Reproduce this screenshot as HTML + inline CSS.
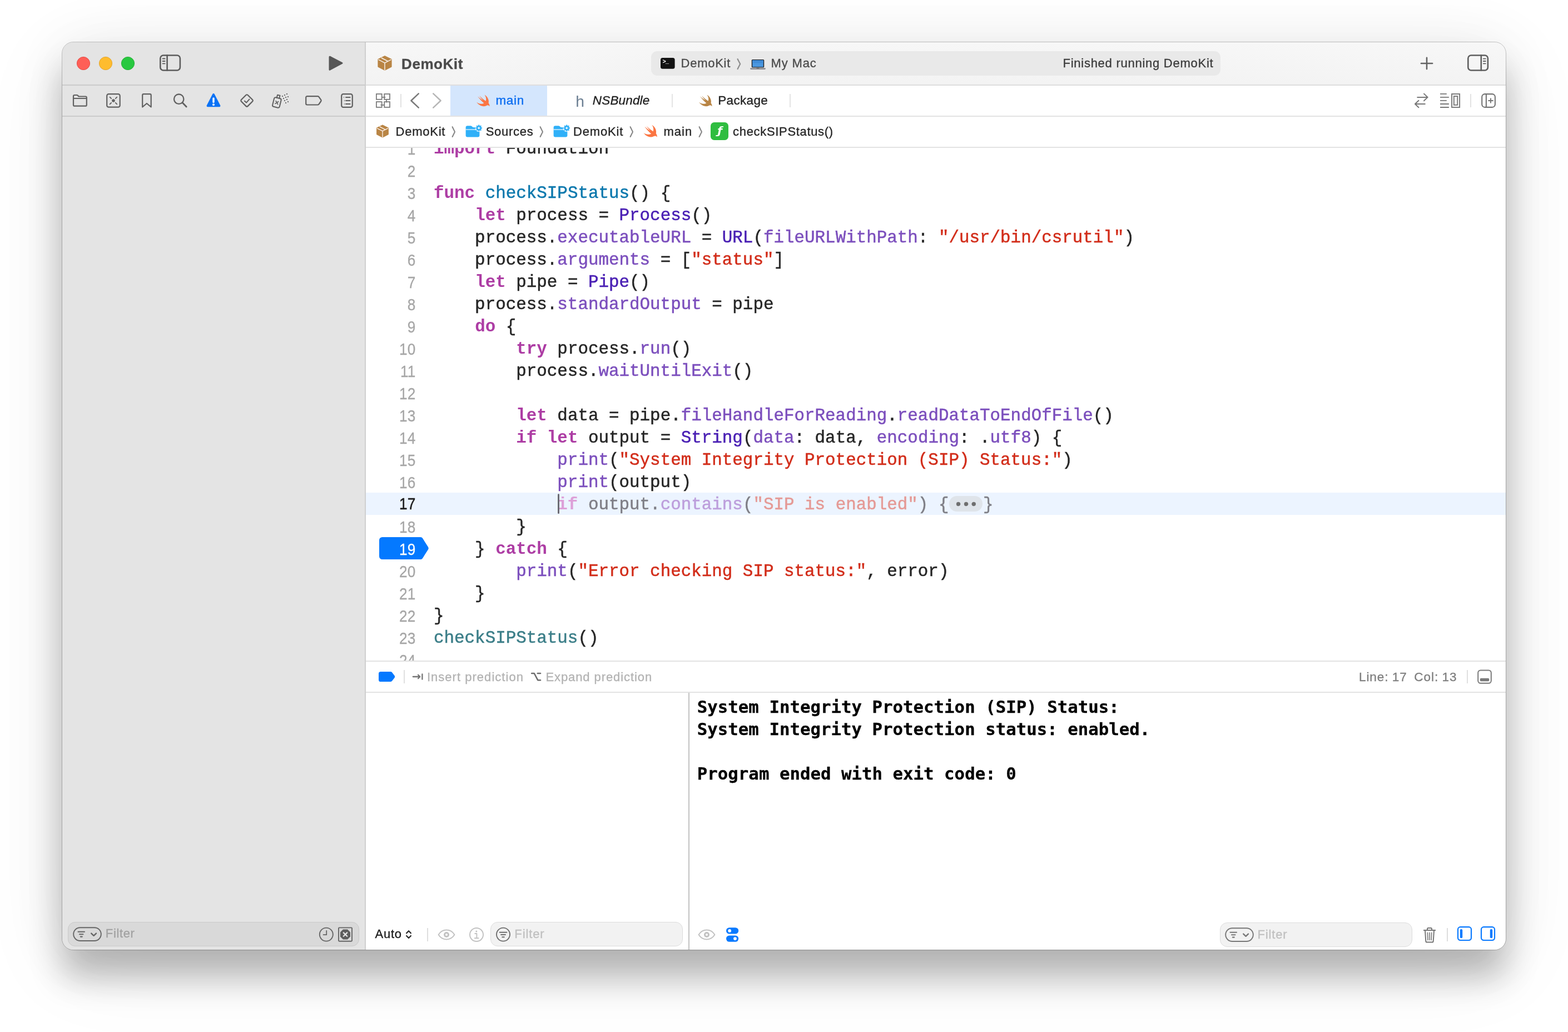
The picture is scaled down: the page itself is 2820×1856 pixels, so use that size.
<!DOCTYPE html>
<html lang="en">
<head>
<meta charset="utf-8">
<title>DemoKit — main.swift</title>
<style>
*{box-sizing:border-box;margin:0;padding:0}
html,body{width:2820px;height:1856px;background:#fff}
body{position:relative;font-family:"Liberation Sans",sans-serif;color:#262626;-webkit-font-smoothing:antialiased}
#shadow{position:absolute;left:112px;top:76px;width:2596px;height:1632px;border-radius:20px;
  box-shadow:0 50px 60px rgba(0,0,0,.24),0 10px 100px rgba(0,0,0,.07),0 30px 160px rgba(0,0,0,.07)}
#win{position:absolute;left:112px;top:76px;width:2596px;height:1632px;border-radius:20px;overflow:hidden;background:#fff}
#pg{position:absolute;left:-112px;top:-76px;width:2820px;height:1856px;will-change:transform}
.abs,#pg>*,#pg svg{position:absolute}
.t{position:absolute;white-space:pre;line-height:1;-webkit-text-stroke:.35px}
/* regions */
#sidebar{left:112px;top:76px;width:544px;height:1632px;background:#e4e4e4}
#sideline{left:656px;top:76px;width:2px;height:1632px;background:#cfcfcf}
#titlebar{left:658px;top:76px;width:2050px;height:76px;background:linear-gradient(#f7f7f7,#f3f3f3)}
.hl{height:2px;background:#dfdfdf}
.tl{width:24px;height:24px;top:102px;border-radius:50%;border:1px solid}
.vl{width:2px;background:#d9d9d9}
.jb{top:226.800px;font-size:23px;color:#262626}
.chev{top:225px;fill:none;stroke:#858585;stroke-width:2.100;stroke-linecap:round;stroke-linejoin:round}
#ed{left:658px;top:266px;width:2050px;height:922px;background:#fff;overflow:hidden}
#ed>*{position:absolute}
.cur{left:0;top:620px;width:2050px;height:40px;background:#ecf4ff}
.bp{left:24px;top:700px}
.n{left:0;width:89.200px;height:40px;line-height:40px;padding-top:.600px;-webkit-text-stroke:.3px;text-align:right;font-size:30.400px;color:#a6a6a6;white-space:pre;transform:scaleX(.86);transform-origin:100% 50%}
.cn{color:#1c1c1c;margin-top:-1.900px;-webkit-text-stroke:.5px}
.bn{color:#fff}
.c{left:122px;height:40px;line-height:40px;padding-top:2.200px;-webkit-text-stroke:.5px;font-family:"Liberation Mono",monospace;font-size:30.880px;color:#262626;white-space:pre}
.kw{color:#ad3da4;font-weight:bold;-webkit-text-stroke:0}
.dc{color:#0b78ad}
.ty{color:#4a20b4}
.fn{color:#7c4fbd}
.st{color:#d22d1a}
.cl{color:#3b7e88}
.gk{color:#dda0d8;font-weight:bold;-webkit-text-stroke:0}.gp{color:#7f7f86}.gf{color:#bd9fdc}.gs{color:#e59a96}
.pill{display:inline-block;vertical-align:top;width:60px;height:28px;margin:4.200px .5px 0 1px;border-radius:14px;background:#dfe4ea;color:#6e6e6e;font-family:"Liberation Sans",sans-serif;font-size:26px;line-height:28px;letter-spacing:4.700px;text-align:center;text-indent:4.700px}
.caret{left:344.600px;top:622px;width:3.200px;height:35.500px;border-radius:1.500px;background:#6b6b74}
.pb{top:1205.800px;font-size:23px;color:#b3b3b3}
.con{position:absolute;left:1253.800px;height:40px;line-height:40px;font-family:"DejaVu Sans Mono","Liberation Mono",monospace;font-weight:bold;font-size:30.750px;color:#000;white-space:pre;-webkit-text-stroke:.3px}
.ff{border-radius:13px;background:#f2f2f2;border:1.500px solid #dcdcdc}
.fl{font-size:24.500px;color:#c0c0c0}
#ring{position:absolute;left:110px;top:74px}
</style>
</head>
<body>
<div id="shadow"></div>
<div id="win"><div id="pg">
<!--SIDEBAR-->
<div id="sidebar"></div>
<div id="titlebar"></div>
<div id="sideline"></div>
<div class="hl" style="left:112px;top:152px;width:545px;background:#cbcbcb"></div>
<div class="hl" style="left:112px;top:208px;width:545px;background:#cbcbcb"></div>
<!-- traffic lights -->
<svg style="left:136px;top:100px" width="110" height="28" viewBox="0 0 110 28">
  <circle cx="14" cy="14" r="11.600" fill="#fe5f57" stroke="#e2463f" stroke-width=".9"/>
  <circle cx="54" cy="14" r="11.600" fill="#febc2e" stroke="#e0a028" stroke-width=".9"/>
  <circle cx="94" cy="14" r="11.600" fill="#28c840" stroke="#1fab30" stroke-width=".9"/>
</svg>
<!-- sidebar toggle -->
<svg style="left:285px;top:96px" width="42" height="34" viewBox="0 0 42 34" fill="none" stroke="#5c5c5c" stroke-width="2.6" stroke-linecap="round">
  <rect x="3.3" y="3.5" width="35.6" height="27" rx="5.5"/>
  <path d="M15.6 3.5v27"/>
  <path d="M7.6 9.5h4M7.6 14h4M7.6 18.4h4" stroke-width="1.8"/>
</svg>
<!-- run -->
<svg style="left:588px;top:96px" width="34" height="36" viewBox="0 0 34 36">
  <path d="M5 6.2 L27 17.5 L5 29.3 Z" fill="#565656" stroke="#565656" stroke-width="3" stroke-linejoin="round"/>
</svg>
<!-- navigator icons -->
<svg style="left:128px;top:166px" width="32" height="30" viewBox="0 0 32 30" fill="none" stroke="#606060" stroke-width="2.2" stroke-linejoin="round" stroke-linecap="round">
  <path d="M4 8.2v-1.2a2 2 0 0 1 2-2h4.2c.8 0 1.4.3 1.9.9l.9 1c.4.4.9.6 1.5.6h11.300a2 2 0 0 1 2 2v13.200a2 2 0 0 1-2 2h-19.800a2 2 0 0 1-2-2z"/>
  <path d="M4.400 11h23"/>
</svg>
<svg style="left:188px;top:166px" width="32" height="30" viewBox="0 0 32 30" fill="none" stroke="#606060" stroke-width="2.2" stroke-linecap="round">
  <rect x="4.200" y="3.200" width="23.500" height="23.500" rx="3.200"/>
  <circle cx="15.950" cy="15" r="2.800" fill="#606060" stroke="none"/>
  <path d="M9.600 8.700l2.500 2.500M22.300 8.700l-2.500 2.500M9.600 21.300l2.500-2.500M22.300 21.300l-2.500-2.500" stroke-width="1.900"/>
</svg>
<svg style="left:248px;top:166px" width="32" height="30" viewBox="0 0 32 30" fill="none" stroke="#606060" stroke-width="2.200" stroke-linejoin="round">
  <path d="M8.200 26.500v-21.300a2 2 0 0 1 2-2h11.500a2 2 0 0 1 2 2v21.300l-7.750-6.500z"/>
</svg>
<svg style="left:308px;top:166px" width="32" height="30" viewBox="0 0 32 30" fill="none" stroke="#606060" stroke-width="2.300" stroke-linecap="round">
  <circle cx="13.700" cy="12.200" r="8.700"/>
  <path d="M20.200 18.800l7 7.200" stroke-width="2.800"/>
</svg>
<svg style="left:368px;top:166px" width="32" height="30" viewBox="0 0 32 30">
  <path d="M16 3.800 L26.600 24.400 L5.400 24.400 Z" fill="#0a72f5" stroke="#0a72f5" stroke-width="3.600" stroke-linejoin="round"/>
  <path d="M16 11v6.600" stroke="#fff" stroke-width="3.400" stroke-linecap="round"/>
  <circle cx="16" cy="22.200" r="2" fill="#fff"/>
</svg>
<svg style="left:428px;top:166px" width="32" height="30" viewBox="0 0 32 30" fill="none" stroke="#606060" stroke-width="2.200" stroke-linejoin="round" stroke-linecap="round">
  <rect x="7.800" y="6.700" width="16.400" height="16.400" rx="2.300" transform="rotate(45 16 14.900)"/>
  <path d="M11.800 15.600l3.200 3 5.400-6" stroke-width="2"/>
</svg>
<svg style="left:486px;top:164px" width="38" height="34" viewBox="0 0 38 34" fill="none" stroke="#606060" stroke-width="2" stroke-linejoin="round" stroke-linecap="round">
  <g transform="rotate(14 12 20)">
    <rect x="5.500" y="12" width="13" height="17" rx="2.600"/>
    <path d="M9.800 12v-5.200h4.600v5.200"/>
    <path d="M9.600 18.200l4.800 4.800M14.400 18.200l-4.800 4.800" stroke-width="1.700"/>
  </g>
  <g fill="#6a6a6a" stroke="none">
    <rect x="21" y="8" width="2" height="2"/><rect x="25" y="6" width="2" height="2"/><rect x="29" y="4" width="2" height="2"/>
    <rect x="23" y="12" width="2" height="2"/><rect x="27" y="10" width="2" height="2"/><rect x="31" y="9" width="2" height="2"/>
    <rect x="25" y="16" width="2" height="2"/><rect x="29" y="14" width="2" height="2"/>
    <rect x="27" y="20" width="2" height="2"/><rect x="31" y="18" width="2" height="2"/>
  </g>
</svg>
<svg style="left:546px;top:166px" width="36" height="30" viewBox="0 0 36 30" fill="none" stroke="#606060" stroke-width="2.200" stroke-linejoin="round">
  <path d="M6.400 7.100h18.800c.9 0 1.600.3 2.200 1l3.900 5.500c.5.800.5 1.600 0 2.400l-3.900 5.500c-.6.700-1.300 1-2.200 1h-18.800a2.200 2.200 0 0 1-2.200-2.200v-11a2.200 2.200 0 0 1 2.200-2.200z"/>
</svg>
<svg style="left:608px;top:166px" width="32" height="30" viewBox="0 0 32 30" fill="none" stroke="#606060" stroke-width="2.200" stroke-linecap="round">
  <rect x="6.200" y="3.100" width="19.600" height="23.800" rx="3.200"/>
  <path d="M14 9h7.600M14 15h7.600M14 21h7.600" stroke-width="2"/>
  <path d="M10 9h.8M11 15h.8M11 21h.8" stroke-width="2" stroke-linecap="butt"/>
</svg>
<!-- sidebar filter -->
<div class="abs" style="left:122px;top:1658px;width:524px;height:44px;border-radius:13px;background:#d9d9d9;border:1.500px solid #c9c9c9"></div>
<svg style="left:129px;top:1664px" width="56" height="32" viewBox="0 0 56 32" fill="none" stroke="#666" stroke-width="1.900" stroke-linecap="round" stroke-linejoin="round">
  <rect x="3.200" y="4.200" width="49.600" height="23.800" rx="11.900"/>
  <path d="M11.500 11.800h11.500M14 16.200h6.500M15.800 20.600h3" stroke-width="2.100"/>
  <path d="M35.200 14.600l4.400 4.200 4.400-4.200" stroke-width="2.400"/>
</svg>
<div class="t" id="t1" style="left:189.80px;top:1668.28px;font-size:22px;color:#a2a2a2;letter-spacing:0.64px">Filter</div>
<svg style="left:571px;top:1665px" width="32" height="32" viewBox="0 0 32 32" fill="none" stroke="#666" stroke-width="1.900" stroke-linecap="round" stroke-linejoin="round">
  <circle cx="15.800" cy="15.600" r="12"/>
  <path d="M16.200 8.800v7.400h-5.600" stroke-width="1.800"/>
</svg>
<svg style="left:605px;top:1665px" width="32" height="32" viewBox="0 0 32 32" fill="none">
  <rect x="4" y="3.400" width="24" height="24.400" rx="1.200" stroke="#666" stroke-width="1.900"/>
  <path d="M12 6.600h8l5 5v8l-5 5h-8l-5-5v-8z" fill="#5e5e5e"/>
  <path d="M12.800 12.400l6.400 6.400M19.200 12.400l-6.400 6.400" stroke="#e4e4e4" stroke-width="2.300" stroke-linecap="round"/>
</svg>
<!-- ===== title bar ===== -->
<svg class="pkg" style="left:677px;top:98px" width="30" height="31" viewBox="0 0 30 31">
  <path d="M15 3.200 L26.600 9 L26.600 21.800 L15 27.800 L3.400 21.800 L3.400 9 Z" fill="#b98545" stroke="#b98545" stroke-width="2" stroke-linejoin="round"/>
  <path d="M3.400 9.200 L15 15.200 L26.600 9.200 M15 15.200 V28.600" fill="none" stroke="#f6f0ea" stroke-width="1.500"/>
  <path d="M8.800 6 L20.800 12.200" fill="none" stroke="#f6f0ea" stroke-width="1.600"/>
</svg>
<div class="t" id="t2" style="left:722.10px;top:101.79px;font-size:26px;font-weight:bold;color:#4b4b4b;letter-spacing:0.55px">DemoKit</div>
<div class="abs" style="left:1171px;top:92px;width:1024px;height:44px;border-radius:11px;background:#e9e9e9"></div>
<svg style="left:1186px;top:102px" width="30" height="24" viewBox="0 0 30 24">
  <rect x="2" y="2" width="25.600" height="19.800" rx="3.600" fill="#121212"/>
  <text x="5.600" y="11.800" font-family="'Liberation Mono',monospace" font-weight="bold" font-size="10.500" letter-spacing="-1.200" fill="#fff">&gt;_</text>
</svg>
<div class="t" id="t3" style="left:1224.60px;top:103.38px;font-size:22px;color:#4c4c4c;letter-spacing:0.72px">DemoKit</div>
<svg style="left:1322px;top:103px" width="14" height="24" viewBox="0 0 14 24" fill="none" stroke="#8c8c8c" stroke-width="2.200" stroke-linecap="round" stroke-linejoin="round"><path d="M4.600 3.200l4.600 8.900-4.600 8.900"/></svg>
<svg style="left:1347px;top:104px" width="32" height="24" viewBox="0 0 32 24">
  <rect x="4.800" y="2.900" width="22.400" height="14.600" rx="1.600" fill="#1d1d1f"/>
  <rect x="6.200" y="4.200" width="19.600" height="12.200" fill="#4a97e0"/>
  <rect x="6.200" y="4.200" width="19.600" height="5" fill="#3f8ad6"/>
  <path d="M2.200 18.200h27.600v1.200c0 .9-.7 1.500-1.500 1.500h-24.600c-.8 0-1.500-.6-1.500-1.500z" fill="#8e8e93"/>
  <rect x="13.500" y="18.200" width="5" height="1.100" fill="#5d5d60"/>
</svg>
<div class="t" id="t4" style="left:1386.60px;top:103.38px;font-size:22px;color:#4c4c4c;letter-spacing:0.84px">My Mac</div>
<div class="t" id="t5" style="left:1911.50px;top:103.38px;font-size:22px;color:#3c3c3c;letter-spacing:0.74px">Finished running DemoKit</div>
<svg style="left:2550px;top:98px" width="32" height="32" viewBox="0 0 32 32" fill="none" stroke="#636363" stroke-width="2.600" stroke-linecap="round"><path d="M16 5.900v20.200M5.900 16h20.200"/></svg>
<svg style="left:2637px;top:96px" width="42" height="34" viewBox="0 0 42 34" fill="none" stroke="#5f5f5f" stroke-width="2.600" stroke-linecap="round">
  <rect x="3.300" y="3.500" width="35.600" height="27" rx="5.500"/>
  <path d="M26.800 3.500v27"/>
  <path d="M30.800 9.700h4M30.800 14h4M30.800 18.300h4" stroke-width="1.800"/>
</svg>
<div class="hl" style="left:658px;top:152px;width:2050px;background:#dedede"></div>
<!-- ===== tab bar ===== -->
<div class="abs" style="left:658px;top:154px;width:2050px;height:54px;background:#fff"></div>
<svg style="left:674px;top:166px" width="30" height="30" viewBox="0 0 30 30" fill="none" stroke="#7c7c7c" stroke-width="1.800">
  <rect x="2.900" y="3" width="9.800" height="9.800"/><rect x="17.200" y="3" width="9.800" height="9.800"/>
  <rect x="2.900" y="17.100" width="9.800" height="9.800"/><rect x="17.200" y="17.100" width="9.800" height="9.800"/>
  <path d="M12.700 8.800h6.600M21 12.800v5.800M10.400 22.800h6.800"/>
</svg>
<div class="vl" style="left:720px;top:169px;height:24px;background:#e2e2e2"></div>
<svg style="left:734px;top:164px" width="24" height="34" viewBox="0 0 24 34" fill="none" stroke="#7a7a7a" stroke-width="2.500" stroke-linecap="round" stroke-linejoin="round"><path d="M18.800 4.400L5.400 17l13.400 12.600"/></svg>
<svg style="left:774px;top:164px" width="24" height="34" viewBox="0 0 24 34" fill="none" stroke="#b6b6b6" stroke-width="2.500" stroke-linecap="round" stroke-linejoin="round"><path d="M5.200 4.400L18.600 17 5.200 29.600"/></svg>
<div class="abs" style="left:810px;top:154px;width:174px;height:54px;background:#d4e6fd"></div>
<svg class="swift" style="left:853.500px;top:165.500px" width="31" height="31" viewBox="0 0 24 24"><path fill="#fb7542" d="M13.543 3.410c4.114 2.470 6.545 7.162 5.549 11.131-.024.093-.05.181-.076.272l.002.001c2.062 2.538 1.500 5.258 1.236 4.745-1.072-2.086-3.066-1.568-4.088-1.043a6.803 6.803 0 0 1-.281.158l-.02.012-.002.002c-2.115 1.123-4.957 1.205-7.812-.022a12.568 12.568 0 0 1-5.640-4.838c.649.480 1.350.902 2.097 1.252 3.019 1.414 6.051 1.311 8.197-.002C9.651 12.730 7.101 9.670 5.146 7.191a10.628 10.628 0 0 1-1.005-1.384c2.340 2.142 6.038 4.830 7.365 5.576C8.690 8.408 6.208 4.743 6.324 4.860c4.436 4.470 8.528 6.996 8.528 6.996.154.085.270.154.360.213.085-.215.160-.437.224-.668.708-2.588-.090-5.548-1.893-7.992z"/></svg>
<div class="t" id="t6" style="left:891.40px;top:169.65px;font-size:22.5px;color:#0a6cf0;letter-spacing:0.67px">main</div>
<div class="t" id="t7" style="left:1035.300px;top:168px;font-size:28.300px;color:#6c7f93;-webkit-text-stroke:0">h</div>
<div class="t" id="t8" style="left:1065.80px;top:169.65px;font-size:22.5px;font-style:italic;color:#1f1f1f;letter-spacing:0.17px">NSBundle</div>
<div class="vl" style="left:1208px;top:169px;height:24px;background:#e4e4e4"></div>
<svg class="swift" style="left:1253.500px;top:165.500px" width="31" height="31" viewBox="0 0 24 24"><path fill="#b98545" d="M13.543 3.410c4.114 2.470 6.545 7.162 5.549 11.131-.024.093-.05.181-.076.272l.002.001c2.062 2.538 1.500 5.258 1.236 4.745-1.072-2.086-3.066-1.568-4.088-1.043a6.803 6.803 0 0 1-.281.158l-.02.012-.002.002c-2.115 1.123-4.957 1.205-7.812-.022a12.568 12.568 0 0 1-5.640-4.838c.649.480 1.350.902 2.097 1.252 3.019 1.414 6.051 1.311 8.197-.002C9.651 12.730 7.101 9.670 5.146 7.191a10.628 10.628 0 0 1-1.005-1.384c2.340 2.142 6.038 4.830 7.365 5.576C8.690 8.408 6.208 4.743 6.324 4.860c4.436 4.470 8.528 6.996 8.528 6.996.154.085.270.154.360.213.085-.215.160-.437.224-.668.708-2.588-.090-5.548-1.893-7.992z"/></svg>
<div class="t" id="t9" style="left:1291.30px;top:169.65px;font-size:22.5px;color:#222;letter-spacing:0.32px">Package</div>
<div class="vl" style="left:1420px;top:169px;height:24px;background:#e4e4e4"></div>
<svg style="left:2540px;top:164px" width="32" height="34" viewBox="0 0 32 34" fill="none" stroke="#777" stroke-width="2" stroke-linecap="round" stroke-linejoin="round">
  <path d="M9.200 10.900h18.400M21 4.600l6.600 6.300-6.600 6.300"/>
  <path d="M22.800 23h-17.900M11.400 16.800l-6.500 6.200 6.500 6.300"/>
</svg>
<svg style="left:2587px;top:164px" width="42" height="34" viewBox="0 0 42 34" fill="none" stroke="#777" stroke-width="1.900">
  <path d="M3 4.900h11.800M3 10.900h15.900M3 16.900h11.800M3 23h15.900M3 29h15.900"/>
  <rect x="24" y="5" width="14.100" height="24"/>
  <rect x="27.800" y="9" width="6.400" height="15.800"/>
</svg>
<div class="vl" style="left:2644px;top:169px;height:24px;background:#e2e2e2"></div>
<svg style="left:2661px;top:164px" width="32" height="34" viewBox="0 0 32 34" fill="none" stroke="#757575" stroke-width="2.100">
  <rect x="4.200" y="5.100" width="23.700" height="23.800" rx="5.200"/>
  <path d="M11.900 5.100v23.800"/>
  <path d="M20 12.400v9.200M15.400 17h9.200" stroke-width="1.900"/>
</svg>
<div class="hl" style="left:658px;top:208px;width:2050px;background:#e3e3e3"></div>
<!-- ===== jump bar ===== -->
<div class="abs" style="left:658px;top:210px;width:2050px;height:54px;background:#fff"></div>
<svg class="pkg" style="left:675px;top:222px" width="26" height="28" viewBox="0 0 30 31">
  <path d="M15 3.200 L26.600 9 L26.600 21.800 L15 27.800 L3.400 21.800 L3.400 9 Z" fill="#b98545" stroke="#b98545" stroke-width="2" stroke-linejoin="round"/>
  <path d="M3.400 9.200 L15 15.200 L26.600 9.200 M15 15.200 V28.600" fill="none" stroke="#fbeee6" stroke-width="1.600"/>
  <path d="M8.800 6 L20.800 12.200" fill="none" stroke="#fbeee6" stroke-width="1.700"/>
</svg>
<div class="t" id="t10" style="top:226.18px;font-size:22px;color:#262626;left:711.60px;letter-spacing:0.74px">DemoKit</div>
<svg class="chev" style="left:809px"  width="14" height="24" viewBox="0 0 14 24"><path d="M4.600 3.200l4.400 8.900-4.400 8.900"/></svg>
<svg class="fold" style="left:835px;top:222px" width="34" height="28" viewBox="0 0 34 28">
  <path d="M2.600 7.200a3 3 0 0 1 3-3h5.800c.9 0 1.500.3 2.100.9l1.200 1.200c.5.500 1.100.7 1.900.7h7.800a3 3 0 0 1 3 3v11.400a3 3 0 0 1-3 3h-18.800a3 3 0 0 1-3-3z" fill="#2fb0f8"/>
  <path d="M2.600 11h24.800" stroke="#fff" stroke-width="1.200"/>
  <circle cx="26.200" cy="8.300" r="6.600" fill="#fff"/>
  <g transform="translate(26.200 8.300)" fill="#2fb0f8">
    <circle r="3.900"/>
    <g><rect x="-1.300" y="-5.800" width="2.600" height="11.600" rx=".6"/><rect x="-1.300" y="-5.800" width="2.600" height="11.600" rx=".6" transform="rotate(45)"/><rect x="-1.300" y="-5.800" width="2.600" height="11.600" rx=".6" transform="rotate(90)"/><rect x="-1.300" y="-5.800" width="2.600" height="11.600" rx=".6" transform="rotate(135)"/></g>
    <circle r="1.700" fill="#fff"/>
  </g>
</svg>
<div class="t" id="t11" style="top:226.18px;font-size:22px;color:#262626;left:873.70px;letter-spacing:0.72px">Sources</div>
<svg class="chev" style="left:967px" width="14" height="24" viewBox="0 0 14 24"><path d="M4.600 3.200l4.400 8.900-4.400 8.900"/></svg>
<svg class="fold" style="left:993px;top:222px" width="34" height="28" viewBox="0 0 34 28">
  <path d="M2.600 7.200a3 3 0 0 1 3-3h5.800c.9 0 1.500.3 2.100.9l1.200 1.200c.5.500 1.100.7 1.900.7h7.800a3 3 0 0 1 3 3v11.400a3 3 0 0 1-3 3h-18.800a3 3 0 0 1-3-3z" fill="#2fb0f8"/>
  <path d="M2.600 11h24.800" stroke="#fff" stroke-width="1.200"/>
  <circle cx="26.200" cy="8.300" r="6.600" fill="#fff"/>
  <g transform="translate(26.200 8.300)" fill="#2fb0f8">
    <circle r="3.900"/>
    <g><rect x="-1.300" y="-5.800" width="2.600" height="11.600" rx=".6"/><rect x="-1.300" y="-5.800" width="2.600" height="11.600" rx=".6" transform="rotate(45)"/><rect x="-1.300" y="-5.800" width="2.600" height="11.600" rx=".6" transform="rotate(90)"/><rect x="-1.300" y="-5.800" width="2.600" height="11.600" rx=".6" transform="rotate(135)"/></g>
    <circle r="1.700" fill="#fff"/>
  </g>
</svg>
<div class="t" id="t12" style="top:226.18px;font-size:22px;color:#262626;left:1031.00px;letter-spacing:0.83px">DemoKit</div>
<svg class="chev" style="left:1128.500px" width="14" height="24" viewBox="0 0 14 24"><path d="M4.600 3.200l4.400 8.900-4.400 8.900"/></svg>
<svg class="swift" style="left:1153.700px;top:220.300px" width="32.500" height="32.500" viewBox="0 0 24 24"><path fill="#fb7542" d="M13.543 3.410c4.114 2.470 6.545 7.162 5.549 11.131-.024.093-.05.181-.076.272l.002.001c2.062 2.538 1.500 5.258 1.236 4.745-1.072-2.086-3.066-1.568-4.088-1.043a6.803 6.803 0 0 1-.281.158l-.02.012-.002.002c-2.115 1.123-4.957 1.205-7.812-.022a12.568 12.568 0 0 1-5.640-4.838c.649.480 1.350.902 2.097 1.252 3.019 1.414 6.051 1.311 8.197-.002C9.651 12.730 7.101 9.670 5.146 7.191a10.628 10.628 0 0 1-1.005-1.384c2.340 2.142 6.038 4.830 7.365 5.576C8.690 8.408 6.208 4.743 6.324 4.860c4.436 4.470 8.528 6.996 8.528 6.996.154.085.270.154.360.213.085-.215.160-.437.224-.668.708-2.588-.090-5.548-1.893-7.992z"/></svg>
<div class="t" id="t13" style="top:226.18px;font-size:22px;color:#262626;left:1193.50px;letter-spacing:1.00px">main</div>
<svg class="chev" style="left:1253px" width="14" height="24" viewBox="0 0 14 24"><path d="M4.600 3.200l4.400 8.900-4.400 8.900"/></svg>
<div class="abs" style="left:1278px;top:220px;width:32px;height:32px;border-radius:6.500px;background:#2fbd40"></div>
<div class="t" id="t14" style="left:1290.50px;top:227.40px;font-size:16.80px;font-family:'DejaVu Sans','Liberation Sans',sans-serif;font-weight:bold;font-style:italic;color:#fff;-webkit-text-stroke:0;transform:scaleX(1.2)">ƒ</div>
<div class="t" id="t15" style="top:226.18px;font-size:22px;color:#262626;left:1318.10px;letter-spacing:0.67px">checkSIPStatus()</div>
<div class="hl" style="left:658px;top:264px;width:2050px;background:#e3e3e3"></div>
<!--JUMPBAR-END-->
<!--EDITOR-->
<div id="ed">
<div class="cur"></div>
<svg class="bp" width="92" height="40" viewBox="0 0 92 40"><path d="M5.500 0h68.500c1.900 0 3.200.7 4.200 2.300l9.800 15.400c.9 1.500.9 3.100 0 4.600l-9.800 15.400c-1 1.600-2.300 2.300-4.200 2.300h-68.500a5.500 5.500 0 0 1-5.500-5.500v-29a5.500 5.500 0 0 1 5.500-5.500z" fill="#0479ff"/></svg>
<div class="n" style="top:-20px">1</div>
<div class="c" style="top:-20px"><span class="kw">import</span> Foundation</div>
<div class="n" style="top:20px">2</div>
<div class="n" style="top:60px">3</div>
<div class="c" style="top:60px"><span class="kw">func</span> <span class="dc">checkSIPStatus</span>() {</div>
<div class="n" style="top:100px">4</div>
<div class="c" style="top:100px">    <span class="kw">let</span> process = <span class="ty">Process</span>()</div>
<div class="n" style="top:140px">5</div>
<div class="c" style="top:140px">    process.<span class="fn">executableURL</span> = <span class="ty">URL</span>(<span class="fn">fileURLWithPath</span>: <span class="st">"/usr/bin/csrutil"</span>)</div>
<div class="n" style="top:180px">6</div>
<div class="c" style="top:180px">    process.<span class="fn">arguments</span> = [<span class="st">"status"</span>]</div>
<div class="n" style="top:220px">7</div>
<div class="c" style="top:220px">    <span class="kw">let</span> pipe = <span class="ty">Pipe</span>()</div>
<div class="n" style="top:260px">8</div>
<div class="c" style="top:260px">    process.<span class="fn">standardOutput</span> = pipe</div>
<div class="n" style="top:300px">9</div>
<div class="c" style="top:300px">    <span class="kw">do</span> {</div>
<div class="n" style="top:340px">10</div>
<div class="c" style="top:340px">        <span class="kw">try</span> process.<span class="fn">run</span>()</div>
<div class="n" style="top:380px">11</div>
<div class="c" style="top:380px">        process.<span class="fn">waitUntilExit</span>()</div>
<div class="n" style="top:420px">12</div>
<div class="n" style="top:460px">13</div>
<div class="c" style="top:460px">        <span class="kw">let</span> data = pipe.<span class="fn">fileHandleForReading</span>.<span class="fn">readDataToEndOfFile</span>()</div>
<div class="n" style="top:500px">14</div>
<div class="c" style="top:500px">        <span class="kw">if</span> <span class="kw">let</span> output = <span class="ty">String</span>(<span class="fn">data</span>: data, <span class="fn">encoding</span>: .<span class="fn">utf8</span>) {</div>
<div class="n" style="top:540px">15</div>
<div class="c" style="top:540px">            <span class="fn">print</span>(<span class="st">"System Integrity Protection (SIP) Status:"</span>)</div>
<div class="n" style="top:580px">16</div>
<div class="c" style="top:580px">            <span class="fn">print</span>(output)</div>
<div class="n cn" style="top:620px">17</div>
<div class="c" style="top:620px">            <span class="gk">if</span><span class="gp"> output.</span><span class="gf">contains</span><span class="gp">(</span><span class="gs">"SIP is enabled"</span><span class="gp">) {</span><span class="pill">•••</span><span class="gp">}</span></div>
<div class="n" style="top:660px">18</div>
<div class="c" style="top:660px">        }</div>
<div class="n bn" style="top:700px">19</div>
<div class="c" style="top:700px">    } <span class="kw">catch</span> {</div>
<div class="n" style="top:740px">20</div>
<div class="c" style="top:740px">        <span class="fn">print</span>(<span class="st">"Error checking SIP status:"</span>, error)</div>
<div class="n" style="top:780px">21</div>
<div class="c" style="top:780px">    }</div>
<div class="n" style="top:820px">22</div>
<div class="c" style="top:820px">}</div>
<div class="n" style="top:860px">23</div>
<div class="c" style="top:860px"><span class="cl">checkSIPStatus</span>()</div>
<div class="n" style="top:900px">24</div>
<div class="caret"></div>
</div>
<!--EDITOR-END-->
<!--BOTTOM-->
<!-- ===== prediction bar ===== -->
<div class="hl" style="left:658px;top:1188px;width:2050px;background:#e3e3e3"></div>
<svg style="left:679px;top:1205px" width="34" height="24" viewBox="0 0 34 24"><path d="M5.600 3h17.600c1.500 0 2.600.6 3.400 1.900l3.900 5.100c.9 1.300.9 2.700 0 4l-3.900 5.100c-.8 1.300-1.900 1.900-3.400 1.900h-17.600a3.600 3.600 0 0 1-3.600-3.600v-10.800a3.600 3.600 0 0 1 3.600-3.600z" fill="#0479ff"/></svg>
<div class="vl" style="left:726px;top:1205px;height:24px;background:#e0e0e0"></div>
<svg style="left:739px;top:1205px" width="24" height="24" viewBox="0 0 24 24" fill="none" stroke="#6d6d6d" stroke-width="2" stroke-linecap="round" stroke-linejoin="round"><path d="M3.800 12h12.200M13 8.700l3.300 3.300-3.300 3.300M20.400 7.300v9.400" stroke-width="2.300" stroke="#757575"/></svg>
<div class="t" id="t16" style="top:1206.78px;font-size:22px;color:#b3b3b3;left:767.90px;letter-spacing:1.03px">Insert prediction</div>
<svg style="left:952px;top:1205px" width="24" height="24" viewBox="0 0 24 24" fill="none" stroke="#6d6d6d" stroke-width="2.300" stroke-linecap="round" stroke-linejoin="round"><path d="M4.200 6h4.600l6.400 12.200h4.800M14.800 6h5.200" stroke-width="2.600"/></svg>
<div class="t" id="t17" style="top:1206.78px;font-size:22px;color:#b3b3b3;left:981.40px;letter-spacing:0.92px">Expand prediction</div>
<div class="t" id="t18" style="left:2443.90px;top:1206.65px;font-size:22.5px;color:#7f7f7f;word-spacing:-1px;letter-spacing:0.98px">Line: 17  Col: 13</div>
<div class="vl" style="left:2638px;top:1205px;height:24px;background:#e0e0e0"></div>
<svg style="left:2654px;top:1201px" width="32" height="32" viewBox="0 0 32 32">
  <rect x="4.200" y="4.400" width="23.600" height="23.400" rx="4.600" fill="none" stroke="#7a7a7a" stroke-width="2"/>
  <rect x="7.800" y="18.800" width="16.400" height="5.400" rx="1.700" fill="#7a7a7a"/>
</svg>
<div class="hl" style="left:658px;top:1244px;width:2050px;background:#e3e3e3"></div>
<!-- ===== debug area ===== -->
<div class="abs" style="left:1238px;top:1246px;width:2px;height:462px;background:#c3c3c3"></div>
<div class="con" style="top:1251px">System Integrity Protection (SIP) Status:</div>
<div class="con" style="top:1291px">System Integrity Protection status: enabled.</div>
<div class="con" style="top:1371px">Program ended with exit code: 0</div>
<!-- variables view bar -->
<div class="t" id="t19" style="left:674.60px;top:1669.28px;font-size:22px;color:#1c1c1c;letter-spacing:0.73px">Auto</div>
<svg style="left:725px;top:1668px" width="20" height="26" viewBox="0 0 20 26" fill="none" stroke="#2a2a2a" stroke-width="2.300" stroke-linecap="round" stroke-linejoin="round"><path d="M6.100 10.200l3.900-4 3.900 4M6.100 15l3.900 4 3.900-4"/></svg>
<div class="vl" style="left:768px;top:1669px;height:24px;background:#dedede"></div>
<svg style="left:785px;top:1666px" width="36" height="30" viewBox="0 0 36 30" fill="none" stroke="#c2c2c2" stroke-width="2">
  <path d="M3.600 15c3.400-5.600 8.300-8.400 14.400-8.400s11 2.800 14.400 8.400c-3.400 5.600-8.300 8.400-14.400 8.400s-11-2.800-14.400-8.400z" stroke-linejoin="round"/>
  <circle cx="18" cy="15" r="5" fill="#c2c2c2" stroke="none"/><circle cx="18" cy="15" r="2" fill="#fff" stroke="none"/>
</svg>
<svg style="left:841px;top:1665px" width="32" height="32" viewBox="0 0 32 32" fill="none" stroke="#c2c2c2" stroke-width="1.900">
  <circle cx="16" cy="16" r="12"/>
  <path d="M13.200 14h3.200v8M12.800 22.200h6.800" stroke-linecap="round" stroke-linejoin="round"/><circle cx="15.800" cy="9.900" r="1.500" fill="#c2c2c2" stroke="none"/>
</svg>
<div class="abs ff" style="left:882px;top:1658px;width:346px;height:44px"></div>
<svg style="left:889px;top:1665px" width="32" height="32" viewBox="0 0 32 32" fill="none" stroke="#6e6e6e" stroke-width="1.900" stroke-linecap="round">
  <circle cx="16" cy="15.600" r="12"/>
  <path d="M9.600 11.800h12.800M12 16h8M14.200 20.200h3.600" stroke-width="2"/>
</svg>
<div class="t" id="t20" style="font-size:22px;color:#c0c0c0;left:925.30px;top:1669.28px;letter-spacing:0.90px">Filter</div>
<!-- console bar -->
<svg style="left:1253px;top:1666px" width="36" height="30" viewBox="0 0 36 30" fill="none" stroke="#c2c2c2" stroke-width="2">
  <path d="M3.600 15c3.400-5.600 8.300-8.400 14.400-8.400s11 2.800 14.400 8.400c-3.400 5.600-8.300 8.400-14.400 8.400s-11-2.800-14.400-8.400z" stroke-linejoin="round"/>
  <circle cx="18" cy="15" r="5" fill="#c2c2c2" stroke="none"/><circle cx="18" cy="15" r="2" fill="#fff" stroke="none"/>
</svg>
<svg style="left:1303px;top:1665px" width="28" height="32" viewBox="0 0 28 32">
  <rect x="3" y="3.200" width="22.200" height="11.400" rx="5.700" fill="#0a7aff"/><circle cx="9.200" cy="8.900" r="2.900" fill="#fff"/>
  <rect x="3" y="17.400" width="22.200" height="11.400" rx="5.700" fill="#0a7aff"/><circle cx="19" cy="23.100" r="2.900" fill="#fff"/>
</svg>
<div class="abs ff" style="left:2194px;top:1659px;width:346px;height:44px"></div>
<svg style="left:2201px;top:1665px" width="56" height="32" viewBox="0 0 56 32" fill="none" stroke="#777" stroke-width="1.900" stroke-linecap="round" stroke-linejoin="round">
  <rect x="3.200" y="4.200" width="49.600" height="23.800" rx="11.900"/>
  <path d="M11.500 11.800h11.500M14 16.200h6.500M15.800 20.600h3" stroke-width="2.100"/>
  <path d="M35.200 14.600l4.400 4.200 4.400-4.200" stroke-width="2.400"/>
</svg>
<div class="t" id="t21" style="font-size:22px;color:#c0c0c0;left:2261.50px;top:1669.98px;letter-spacing:0.84px">Filter</div>
<svg style="left:2556px;top:1665px" width="30" height="34" viewBox="0 0 30 34" fill="none" stroke="#777" stroke-width="2" stroke-linecap="round" stroke-linejoin="round">
  <path d="M4.800 8h20.400M11 7.600v-2.200c0-.9.600-1.500 1.500-1.500h5c.9 0 1.500.6 1.500 1.500v2.200"/>
  <path d="M7 8.400l1.300 19.200c.1 1.300.9 2 2.200 2h9c1.300 0 2.100-.7 2.200-2l1.300-19.200"/>
  <path d="M11.400 12.400l.5 13.200M15 12.400v13.200M18.600 12.400l-.5 13.200" stroke-width="1.600"/>
</svg>
<div class="vl" style="left:2602px;top:1669px;height:24px;background:#dedede"></div>
<svg style="left:2618px;top:1663px" width="32" height="32" viewBox="0 0 32 32">
  <rect x="4" y="4.200" width="24" height="23.800" rx="4.400" fill="none" stroke="#0a7aff" stroke-width="2.200"/>
  <rect x="7.800" y="8" width="4.400" height="16.200" rx="2" fill="#0a7aff"/>
</svg>
<svg style="left:2660px;top:1663px" width="32" height="32" viewBox="0 0 32 32">
  <rect x="4" y="4.200" width="24" height="23.800" rx="4.400" fill="none" stroke="#0a7aff" stroke-width="2.200"/>
  <rect x="19.800" y="8" width="4.400" height="16.200" rx="2" fill="#0a7aff"/>
</svg>
<!--BOTTOM-END-->
</div></div>
<svg id="ring" width="2600" height="1636" viewBox="0 0 2600 1636"><rect x="1.500" y="1.500" width="2597" height="1633" rx="20.500" fill="none" stroke="#000" stroke-opacity=".22" stroke-width="1"/></svg>
</body>
</html>
